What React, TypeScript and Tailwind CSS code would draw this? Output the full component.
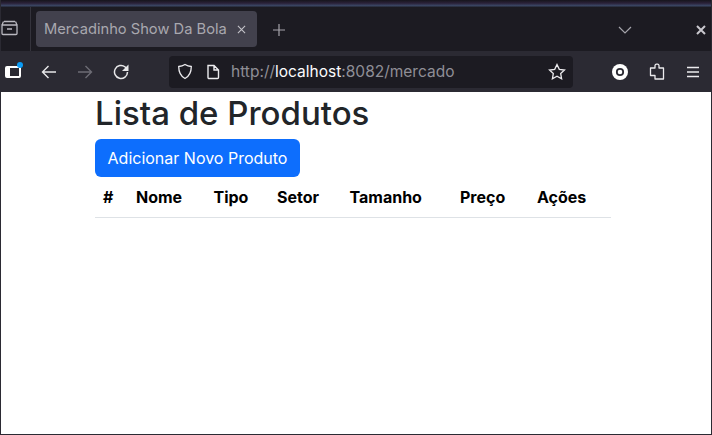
export default function App() {
  const cols = [
    ["#", "w-[33px]"],
    ["Nome", "w-[77.500px]"],
    ["Tipo", "w-[63.500px]"],
    ["Setor", "w-[72.500px]"],
    ["Tamanho", "w-[110.500px]"],
    ["Preço", "w-[77px]"],
    ["Ações", "w-[82px]"],
  ];
  return (
    <div className="w-[712px] h-[435px] flex flex-col overflow-hidden bg-white border-x border-b border-[#2b2a33] font-['Inter',sans-serif]">
      <div className="h-[7px] bg-[linear-gradient(180deg,#16151c_0%,#2a2138_45%,#3c4a68_85%,#1c1b22_100%)]" />
      <div className="h-[44px] bg-[#1c1b22] flex items-start">
        <div className="w-[31px] h-[44px] flex items-start">
          <div className="w-[30px] h-[44px] border-r border-[#34333c] flex items-center">
            <svg width="17" height="17" viewBox="0 0 17 17" fill="none" stroke="#b9b8c0" strokeWidth="1.300" className="-mt-[4px]">
              <path d="M3 2.500h11M1 6h15v8.500a1 1 0 0 1-1 1H2a1 1 0 0 1-1-1zM1 6l1.500-3.500M16 6l-1.500-3.500M6 10h5" />
            </svg>
          </div>
        </div>
        <div className="ml-[4px] mt-[4px] w-[221px] h-[36px] rounded-[4px] bg-[#42414d] flex items-center pl-[8px] text-[14.700px] text-[#a9a8af]">
          <span className="whitespace-nowrap">Mercadinho Show Da Bola</span>
          <svg width="9" height="9" viewBox="0 0 10 10" stroke="#c4c3c9" strokeWidth="1.200" className="ml-[10px]">
            <path d="M1 1l8 8M9 1l-8 8" />
          </svg>
        </div>
        <svg width="14" height="14" viewBox="0 0 14 14" stroke="#a5a4ab" strokeWidth="1.200" className="ml-[15px] mt-[16px]">
          <path d="M7 1v12M1 7h12" />
        </svg>
        <div className="flex-1" />
        <svg width="14" height="8" viewBox="0 0 14 8" fill="none" stroke="#a5a4ab" strokeWidth="1.200" className="mt-[19px] mr-[64px]">
          <path d="M1 1l6 6 6-6" />
        </svg>
        <svg width="10" height="10" viewBox="0 0 10 10" stroke="#c9c8ce" strokeWidth="2" className="mt-[18px] mr-[5px]">
          <path d="M1 1l8 8M9 1l-8 8" />
        </svg>
      </div>
      <div className="h-[41px] bg-[#2b2a33] flex items-center relative">
        <div className="relative ml-[4px] w-[16px] h-[12px] rounded-[2px] border-2 border-white border-l-[5px]">
          <div className="absolute -right-[4px] -top-[6px] w-[6px] h-[6px] rounded-full bg-[#0a9bf5]" />
        </div>
        <svg width="16" height="16" viewBox="0 0 16 16" fill="none" stroke="#e8e8ea" strokeWidth="1.400" className="ml-[20px]">
          <path d="M15 8H1.500M7.500 2l-6 6 6 6" />
        </svg>
        <svg width="16" height="16" viewBox="0 0 16 16" fill="none" stroke="#6d6c75" strokeWidth="1.400" className="ml-[20px]">
          <path d="M1 8h13.500M8.500 2l6 6-6 6" />
        </svg>
        <svg width="16" height="16" viewBox="0 0 16 16" fill="none" stroke="#e8e8ea" strokeWidth="1.500" className="ml-[20px]">
          <path d="M14.500 8a6.500 6.500 0 1 1-2.300-5L14.200 5" />
          <path d="M15.500 .5v6.500H9z" fill="#e8e8ea" stroke="none" />
        </svg>
        <div className="ml-[40px] w-[404px] h-[32px] rounded-[4px] bg-[#1c1b22] flex items-center">
          <svg width="16" height="17" viewBox="0 0 16 17" fill="none" stroke="#ecebee" strokeWidth="1.300" className="ml-[8px]">
            <path d="M8 1.500c2 1.300 4 1.900 6.300 2 0 5.500-1.800 9.600-6.300 12-4.500-2.400-6.300-6.500-6.300-12 2.300-.1 4.300-.7 6.300-2z" />
          </svg>
          <svg width="14" height="16" viewBox="0 0 14 16" fill="none" stroke="#ecebee" strokeWidth="1.400" className="ml-[13px]">
            <path d="M2 1.500h6l4.500 4.500v7.500a1 1 0 0 1-1 1H3a1 1 0 0 1-1-1zM8 1.500V6h4.500" />
          </svg>
          <span className="ml-[11px] text-[15.500px] text-[#8f8e96] whitespace-nowrap">
            http://<span className="text-[#fbfbfe]">localhost</span>:8082/mercado
          </span>
          <div className="flex-1" />
          <svg width="18" height="17" viewBox="0 0 18 17" fill="none" stroke="#ecebee" strokeWidth="1.300" className="mr-[7px]">
            <path d="M9 1.500l2.300 4.800 5.200.7-3.800 3.600.9 5.200L9 13.300l-4.600 2.500.9-5.200L1.500 7l5.200-.7z" />
          </svg>
        </div>
        <svg width="16" height="16" viewBox="0 0 16 16" className="ml-[39px]">
          <circle cx="8" cy="8" r="8" fill="#ffffff" />
          <circle cx="8" cy="8" r="3.200" fill="none" stroke="#2b2a33" strokeWidth="1.800" />
        </svg>
        <svg width="16" height="17" viewBox="0 0 16 17" fill="none" stroke="#ecebee" strokeWidth="1.300" strokeLinejoin="round" className="ml-[21px]">
          <path d="M6 5V2.500a1.500 1.500 0 0 1 1.500-1.300h1A1.500 1.500 0 0 1 10 2.500V5h4.500v11H6v-3.500H1.500V5z" />
        </svg>
        <svg width="14" height="12" viewBox="0 0 14 12" stroke="#ecebee" strokeWidth="1.400" className="ml-[21px]">
          <path d="M1 1.500h12M1 6h12M1 10.500h12" />
        </svg>
      </div>
      <main className="flex-1 pl-[94px] bg-white">
        <h1 className="text-[33px] leading-[38px] font-medium text-[#212529] mt-[2px] whitespace-nowrap">Lista de Produtos</h1>
        <button className="mt-[7px] block w-[205px] h-[38px] rounded-[6px] bg-[#0d6efd] text-white text-[16px] text-center whitespace-nowrap">
          Adicionar Novo Produto
        </button>
        <div className="mt-[1px] w-[516px] h-[40px] flex border-b border-[#dee2e6]">
          {cols.map(([label, w]) => (
            <div key={label} className={`${w} pl-[8px] text-[16px] leading-[39px] font-bold text-black whitespace-nowrap`}>
              {label}
            </div>
          ))}
        </div>
      </main>
    </div>
  );
}
